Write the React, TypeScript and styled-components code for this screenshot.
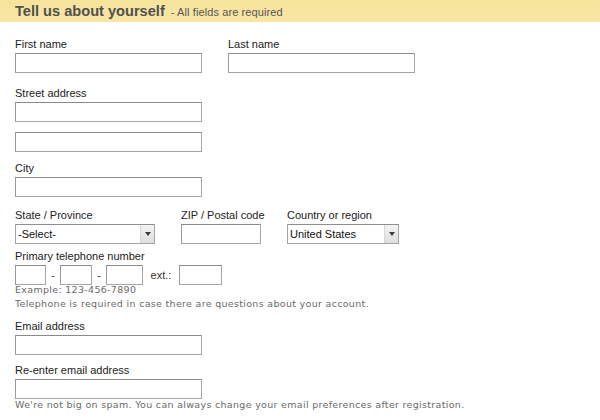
import React from "react";
import styled, { createGlobalStyle } from "styled-components";

const GlobalStyle = createGlobalStyle`
  html, body { margin: 0; padding: 0; background: #ffffff; }
  body { font-family: "Liberation Sans", Arial, sans-serif; }
`;

const Page = styled.div`
  width: 600px;
  height: 420px;
  overflow: hidden;
  background: #fff;
`;

const Header = styled.div`
  height: 22px;
  background: linear-gradient(#f6e49c, #f7e6a4);
  display: flex;
  align-items: baseline;
  padding-left: 15px;
  box-sizing: border-box;
  padding-top: 3px;
`;

const Title = styled.h1`
  margin: 0;
  font-size: 14.6px;
  font-weight: bold;
  color: #505050;
  line-height: 17px;
`;

const Subtitle = styled.span`
  font-size: 11px;
  letter-spacing: 0.1px;
  color: #555;
  margin-left: 6px;
`;

const Form = styled.div`
  padding: 16px 0 0 15px;
  display: flex;
  flex-direction: column;
`;

const Row = styled.div<{ $mt?: number }>`
  display: flex;
  gap: 26px;
  margin-top: ${(p) => p.$mt ?? 0}px;
`;

const Field = styled.div<{ $w?: number }>`
  display: flex;
  flex-direction: column;
  ${(p) => (p.$w ? `width: ${p.$w}px;` : "")}
`;

const Label = styled.label`
  font-size: 11px;
  line-height: 13px;
  color: #222;
  margin-bottom: 2px;
  white-space: nowrap;
`;

const Input = styled.input<{ $w: number }>`
  width: ${(p) => p.$w}px;
  height: 20px;
  box-sizing: border-box;
  border: 1px solid #a5a5a5;
  border-top-color: #8a8a8a;
  border-left-color: #9a9a9a;
  background: #fff;
  margin: 0;
  padding: 0 3px;
  font-family: "Liberation Sans", Arial, sans-serif;
  font-size: 11px;
`;

const SelectBox = styled.div<{ $w: number }>`
  width: ${(p) => p.$w}px;
  height: 20px;
  box-sizing: border-box;
  border: 1px solid #a5a5a5;
  border-top-color: #8f8f8f;
  display: flex;
  align-items: stretch;
  background: #fff;
`;

const SelectText = styled.span`
  flex: 1;
  font-size: 11px;
  color: #111;
  line-height: 18px;
  padding-left: 2px;
`;

const SelectButton = styled.span`
  width: 13px;
  border-left: 1px solid #d6d6d6;
  background: linear-gradient(#f4f4f4, #dedede);
  display: flex;
  align-items: center;
  justify-content: center;
`;

const Arrow = styled.span`
  width: 0;
  height: 0;
  border-left: 3px solid transparent;
  border-right: 3px solid transparent;
  border-top: 4px solid #3a3a3a;
`;

const PhoneRow = styled.div`
  display: flex;
  align-items: center;
`;

const Sep = styled.span<{ $w: number }>`
  width: ${(p) => p.$w}px;
  text-align: center;
  font-size: 11px;
  color: #333;
`;

const Hint = styled.div<{ $mt?: number }>`
  font-family: "DejaVu Sans", Verdana, sans-serif;
  font-size: 9.5px;
  letter-spacing: 0.31px;
  color: #6a6a6a;
  line-height: 12px;
  margin-top: ${(p) => p.$mt ?? 0}px;
  white-space: nowrap;
`;

const Select = ({ w, text }: { w: number; text: string }) => (
  <SelectBox $w={w}>
    <SelectText>{text}</SelectText>
    <SelectButton>
      <Arrow />
    </SelectButton>
  </SelectBox>
);

export default function App() {
  return (
    <Page>
      <GlobalStyle />
      <Header>
        <Title>Tell us about yourself</Title>
        <Subtitle>- All fields are required</Subtitle>
      </Header>
      <Form>
        <Row>
          <Field>
            <Label>First name</Label>
            <Input $w={187} />
          </Field>
          <Field>
            <Label>Last name</Label>
            <Input $w={187} />
          </Field>
        </Row>
        <Row $mt={14}>
          <Field>
            <Label>Street address</Label>
            <Input $w={187} />
          </Field>
        </Row>
        <Row $mt={10}>
          <Input $w={187} />
        </Row>
        <Row $mt={10}>
          <Field>
            <Label>City</Label>
            <Input $w={187} />
          </Field>
        </Row>
        <Row $mt={12}>
          <Field $w={140}>
            <Label>State / Province</Label>
            <Select w={140} text="-Select-" />
          </Field>
          <Field $w={80}>
            <Label>ZIP / Postal code</Label>
            <Input $w={80} />
          </Field>
          <Field $w={112}>
            <Label>Country or region</Label>
            <Select w={112} text="United States" />
          </Field>
        </Row>
        <Row $mt={6}>
          <Field>
            <Label>Primary telephone number</Label>
            <PhoneRow>
              <Input $w={31} />
              <Sep $w={14}>-</Sep>
              <Input $w={32} />
              <Sep $w={14}>-</Sep>
              <Input $w={37} />
              <Sep $w={36}>ext.:</Sep>
              <Input $w={43} />
            </PhoneRow>
            <Hint $mt={-1}>Example: 123-456-7890</Hint>
            <Hint $mt={2}>
              Telephone is required in case there are questions about your
              account.
            </Hint>
          </Field>
        </Row>
        <Row $mt={10}>
          <Field>
            <Label>Email address</Label>
            <Input $w={187} />
          </Field>
        </Row>
        <Row $mt={9}>
          <Field>
            <Label>Re-enter email address</Label>
            <Input $w={187} />
            <Hint>
              We're not big on spam. You can always change your email
              preferences after registration.
            </Hint>
          </Field>
        </Row>
      </Form>
    </Page>
  );
}
